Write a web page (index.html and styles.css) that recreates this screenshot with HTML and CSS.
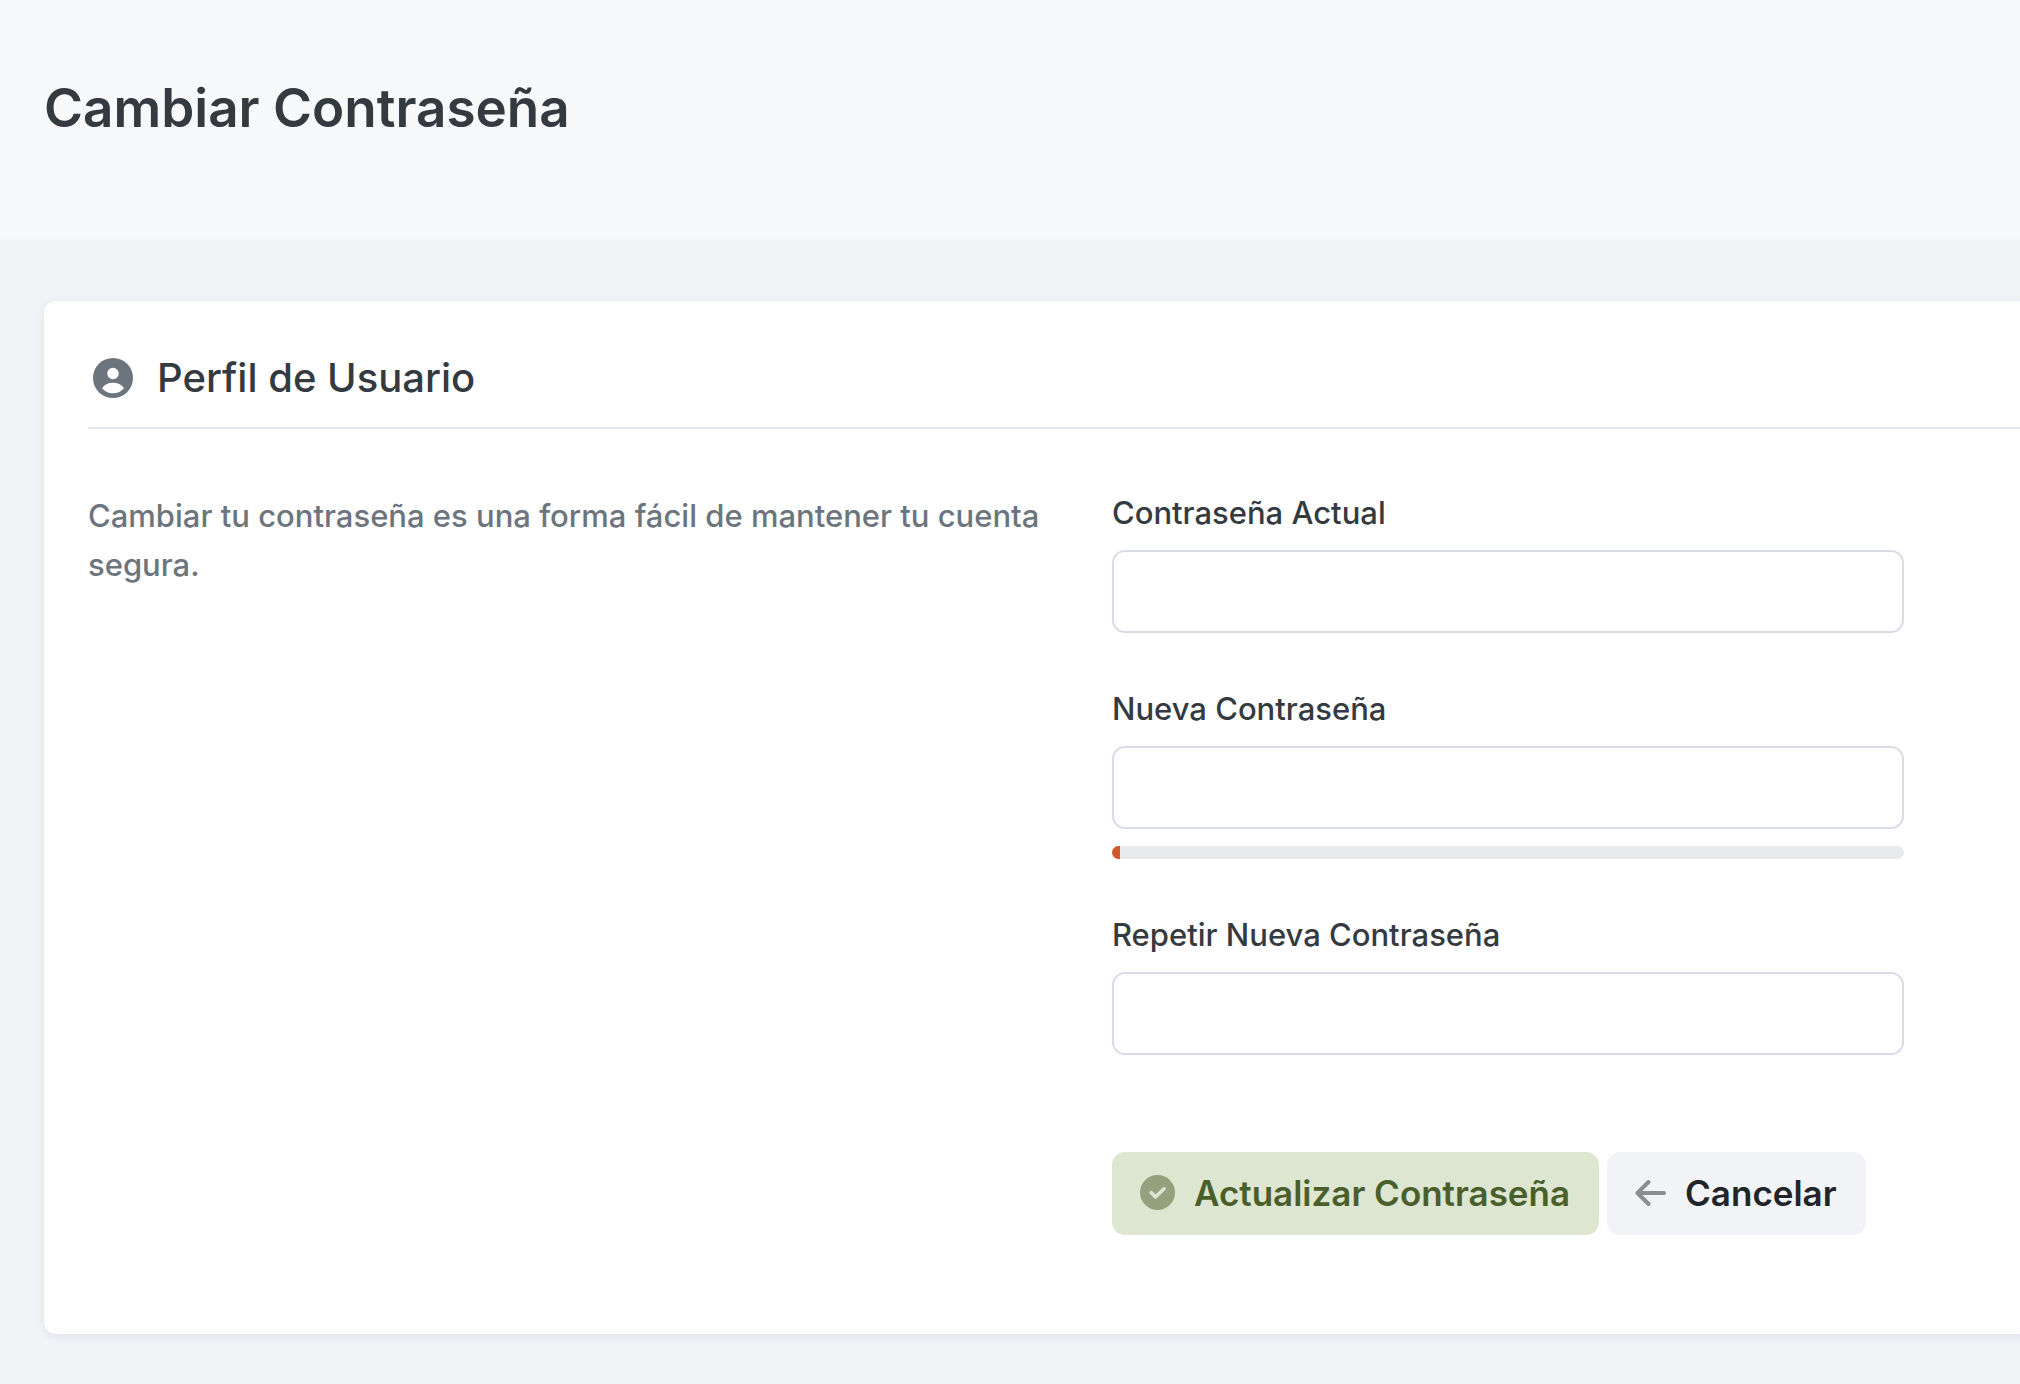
FILE: index.html
```html
<!DOCTYPE html>
<html lang="es">
<head>
<meta charset="utf-8">
<meta name="viewport" content="width=device-width, initial-scale=1">
<title>Cambiar Contraseña</title>
<link rel="stylesheet" href="styles.css">
</head>
<body>
<header class="page-header">
  <h1 class="page-title">Cambiar Contraseña</h1>
</header>
<main class="content">
  <section class="card">
    <h2 class="card-title">
      <svg class="title-icon" viewBox="0 0 40 40" aria-hidden="true">
        <circle cx="20" cy="20" r="20" fill="currentColor"/>
        <circle cx="20" cy="15.500" r="5.700" fill="#fff"/>
        <path d="M9 30.200C11.500 26.500 15.500 24.800 20 24.800S28.500 26.500 31 30.200C28.500 33.300 24.500 35.200 20 35.200S11.500 33.300 9 30.200Z" fill="#fff"/>
      </svg>
      Perfil de Usuario
    </h2>
    <div class="card-body">
      <p class="description">Cambiar tu contraseña es una forma fácil de mantener tu cuenta segura.</p>
      <form class="form">
        <div class="field">
          <label class="label" for="current">Contraseña Actual</label>
          <input class="input" type="password" id="current">
        </div>
        <div class="field">
          <label class="label" for="new">Nueva Contraseña</label>
          <input class="input" type="password" id="new">
          <div class="strength" role="progressbar" aria-label="Seguridad" aria-valuenow="1" aria-valuemin="0" aria-valuemax="100">
            <div class="strength-bar" style="width: 1%"></div>
          </div>
        </div>
        <div class="field">
          <label class="label" for="repeat">Repetir Nueva Contraseña</label>
          <input class="input" type="password" id="repeat">
        </div>
        <div class="actions">
          <button class="button button-primary" type="submit">
            <svg class="check-icon" viewBox="0 0 35 35" aria-hidden="true">
              <circle cx="17.500" cy="17.500" r="17.500" fill="currentColor"/>
              <path d="M11.200 17.600L15.500 22L24 13.800" fill="none" stroke="#dde6d0" stroke-width="3.600" stroke-linecap="round" stroke-linejoin="round"/>
            </svg>
            Actualizar Contraseña
          </button>
          <a class="button button-secondary" href="#">
            <svg class="arrow-icon" viewBox="0 0 31 28" aria-hidden="true">
              <path d="M13.500 3L2.500 14L13.500 25M3 14H29" fill="none" stroke="currentColor" stroke-width="4" stroke-linecap="round" stroke-linejoin="round"/>
            </svg>
            Cancelar
          </a>
        </div>
      </form>
    </div>
  </section>
</main>
</body>
</html>
```
FILE: styles.css
```css
* {
  box-sizing: border-box;
}

body {
  margin: 0;
  min-height: 100vh;
  background: #f1f3f7;
  color: #343a40;
  font-family: Inter, "Liberation Sans", sans-serif;
  font-size: 31px;
  font-weight: 500;
  line-height: 48px;
}

.page-header {
  padding: 74px 44px 97px;
  background: #f8f9fb;
}

.page-title {
  margin: 0;
  font-size: 53px;
  font-weight: 600;
  line-height: 68px;
}

.content {
  padding: 62px 0 50px 44px;
  overflow: hidden;
}

/* The card runs past the right edge of the content area. */
.card {
  margin-right: -12px;
  padding: 44px 12px 99px 44px;
  border-radius: 12px;
  background: #fff;
  box-shadow: 0 2px 8px #dfe1eb;
}

.card-title {
  display: flex;
  align-items: center;
  gap: 24px;
  margin: 0 0 60px;
  padding: 8px 0 24px 5px;
  border-bottom: 2px solid #e4e7ee;
  font-size: 40px;
  font-weight: 500;
  line-height: 50px;
}

.title-icon {
  width: 40px;
  height: 40px;
  color: #6c757d;
}

.card-body {
  display: grid;
  grid-template-columns: 53fr 41fr 6fr;
}

.description {
  margin: 2px 0 0;
  padding-right: 44px;
  color: #6c757d;
  line-height: 49px;
}

.field {
  margin-bottom: 52px;
}

.label {
  display: block;
  margin-bottom: 13px;
}

.input {
  display: block;
  width: 100%;
  height: 83px;
  padding: 16px 24px;
  border: 2px solid #d9dce7;
  border-radius: 13px;
  background: #fff;
  color: inherit;
  font: inherit;
}

.strength {
  height: 13px;
  margin-top: 17px;
  overflow: hidden;
  border-radius: 7px;
  background: #e9eaee;
}

.strength-bar {
  height: 100%;
  background: #d1582c;
}

.actions {
  display: flex;
  gap: 8px;
  margin-top: 97px;
}

.button {
  display: flex;
  align-items: center;
  gap: 19px;
  height: 83px;
  padding: 0 29px 2px 28px;
  border: 0;
  border-radius: 13px;
  font: inherit;
  font-size: 35px;
  font-weight: 600;
  text-decoration: none;
  white-space: nowrap;
}

.button-primary {
  background: #dde6d0;
  color: #4a5f2b;
}

.button-secondary {
  background: #f1f3f7;
  color: #212529;
}

.check-icon {
  width: 35px;
  height: 35px;
  color: #94a17e;
}

.arrow-icon {
  width: 31px;
  height: 28px;
  color: #8b8d91;
}
```
